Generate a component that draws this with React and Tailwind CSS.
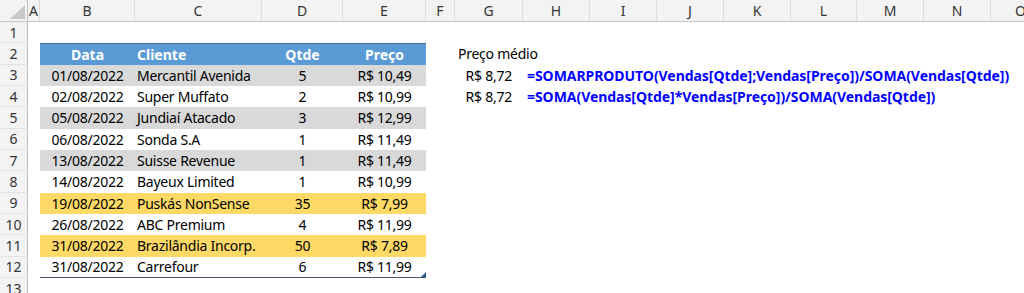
import React from "react";

const FONT = { fontFamily: '"Noto Sans", "Open Sans", Arial, sans-serif' };

const colHeads = [
  { k: "A", w: "w-[12px]" },
  { k: "B", w: "w-[95px]" },
  { k: "C", w: "w-[127px]" },
  { k: "D", w: "w-[81px]" },
  { k: "E", w: "w-[83px]" },
  { k: "F", w: "w-[29px]" },
  { k: "G", w: "w-[68px]" },
  { k: "H", w: "w-[67px]" },
  { k: "I", w: "w-[67px]" },
  { k: "J", w: "w-[67px]" },
  { k: "K", w: "w-[67px]" },
  { k: "L", w: "w-[66px]" },
  { k: "M", w: "w-[67px]" },
  { k: "N", w: "w-[67px]" },
  { k: "O", w: "w-[60px]" },
];

const data = [
  ["01/08/2022", "Mercantil Avenida", "5", "R$ 10,49", "bg-[#d9d9d9]"],
  ["02/08/2022", "Super Muffato", "2", "R$ 10,99", "bg-white"],
  ["05/08/2022", "Jundiaí Atacado", "3", "R$ 12,99", "bg-[#d9d9d9]"],
  ["06/08/2022", "Sonda S.A", "1", "R$ 11,49", "bg-white"],
  ["13/08/2022", "Suisse Revenue", "1", "R$ 11,49", "bg-[#d9d9d9]"],
  ["14/08/2022", "Bayeux Limited", "1", "R$ 10,99", "bg-white"],
  ["19/08/2022", "Puskás NonSense", "35", "R$ 7,99", "bg-[#ffd966]"],
  ["26/08/2022", "ABC Premium", "4", "R$ 11,99", "bg-white"],
  ["31/08/2022", "Brazilândia Incorp.", "50", "R$ 7,89", "bg-[#ffd966]"],
  ["31/08/2022", "Carrefour", "6", "R$ 11,99", "bg-white"],
];

function Row({ n, children }) {
  return (
    <div className="flex h-[21.33px]">
      <div className="w-[28px] shrink-0 bg-[#f3f3f3] border-r border-r-[#bdbdbd] border-b border-b-[#e2e2e2] flex items-center justify-center text-[14px] text-[#333]">
        {n}
      </div>
      <div className="w-[12px] shrink-0" />
      {children}
    </div>
  );
}

function Right({ g, h }) {
  return (
    <>
      <div className="w-[29px] shrink-0" />
      <div className="w-[68px] shrink-0 flex items-center justify-end pr-[11px] whitespace-nowrap tracking-[-0.25px]">
        {g}
      </div>
      <div className="w-[67px] shrink-0 flex items-center pl-[4px] whitespace-nowrap font-bold text-[#0000ff] tracking-[-0.05px]">
        {h}
      </div>
    </>
  );
}

export default function App() {
  return (
    <div className="w-[1024px] h-[293px] overflow-hidden bg-white text-black text-[14px]" style={FONT}>
      {/* column headers */}
      <div className="flex h-[22px] bg-[#f3f3f3] border-b border-b-[#c6c6c6]">
        <div className="w-[28px] shrink-0 border-r border-r-[#bdbdbd] relative">
          <svg className="absolute left-[10px] top-[5px]" width="15" height="14" viewBox="0 0 15 14">
            <polygon points="15,0 15,14 0,14" fill="#c8c8c8" />
          </svg>
        </div>
        {colHeads.map((c) => (
          <div
            key={c.k}
            className={`${c.w} shrink-0 border-r border-r-[#dcdcdc] flex items-center justify-center text-[14px] text-[#333]`}
          >
            {c.k}
          </div>
        ))}
      </div>

      <Row n="1" />

      <Row n="2">
        <div className="flex w-[386px] shrink-0 bg-[#5b9bd5] border-t border-t-[#41719c] text-white font-bold">
          <div className="w-[95px] flex items-center justify-center">Data</div>
          <div className="w-[127px] flex items-center pl-[2px]">Cliente</div>
          <div className="w-[81px] flex items-center justify-center">Qtde</div>
          <div className="w-[83px] flex items-center justify-center">Preço</div>
        </div>
        <div className="w-[29px] shrink-0" />
        <div className="w-[68px] shrink-0 flex items-center pl-[3px] whitespace-nowrap tracking-[-0.25px]">Preço médio</div>
      </Row>

      {data.map((r, i) => {
        const last = i === data.length - 1;
        return (
          <Row key={i} n={String(i + 3)}>
            <div
              className={`flex w-[386px] shrink-0 relative tracking-[-0.25px] ${r[4]} ${last ? "border-b border-b-[#44546a]" : ""}`}
            >
              <div className="w-[95px] flex items-center justify-center">{r[0]}</div>
              <div className="w-[127px] flex items-center pl-[2px] whitespace-nowrap">{r[1]}</div>
              <div className="w-[81px] flex items-center justify-center">{r[2]}</div>
              <div className="w-[83px] flex items-center justify-center">{r[3]}</div>
              {last && (
                <svg className="absolute right-0 bottom-0" width="5" height="5" viewBox="0 0 5 5">
                  <polygon points="5,0 5,5 0,5" fill="#2f5597" />
                </svg>
              )}
            </div>
            {i === 0 && (
              <Right g="R$ 8,72" h="=SOMARPRODUTO(Vendas[Qtde];Vendas[Preço])/SOMA(Vendas[Qtde])" />
            )}
            {i === 1 && (
              <Right g="R$ 8,72" h="=SOMA(Vendas[Qtde]*Vendas[Preço])/SOMA(Vendas[Qtde])" />
            )}
          </Row>
        );
      })}

      <Row n="13" />
    </div>
  );
}
